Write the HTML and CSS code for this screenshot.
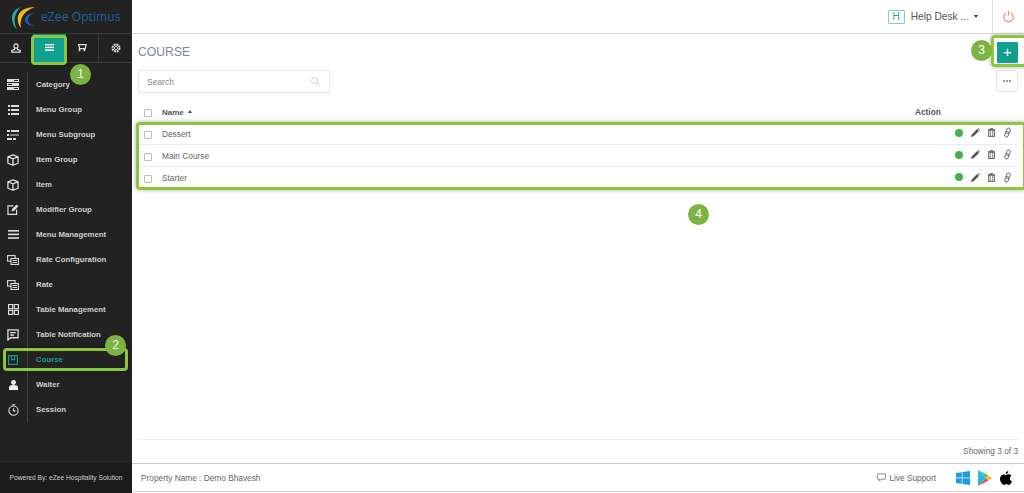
FILE: index.html
```html
<!DOCTYPE html>
<html>
<head>
<meta charset="UTF-8">
<title>Course</title>
<link rel="stylesheet" href="styles.css">
</head>
<body>
<div class="app">
	<aside class="sidebar">
		<div class="logo">
			<svg width="24" height="22" viewBox="0 0 24 22">
				<path d="M9 0C2 2 0 7 0 11c0 5 2 9 5 11-2-4-3-7-2-12C4 6 6 2 9 0z" fill="#2aa7a0"/>
				<path d="M23 0C15 0 8 3 6 9c-1 5 1 10 3 12-1-6 0-11 4-15 3-3 7-5 10-6z" fill="#f2b71c"/>
				<path d="M23 6c-6 0-10 3-10 7 0 3 4 6 10 6-4-1-7-3-7-6s3-6 7-7z" fill="#1c5fa8"/>
			</svg>
			<span class="logo-text">eZee Optimus</span>
		</div>
		<div class="tabs">
			<div class="tab">
				<svg width="10" height="10" viewBox="0 0 12 12" fill="none" stroke="#e4e4e4" stroke-width="1.4"><circle cx="6" cy="3.5" r="2.5"/><path d="M4.500 6v1.500L1 9v2h10V9L7.500 7.500V6"/></svg>
			</div>
			<div class="tab tab-active">
				<svg width="9" height="7" viewBox="0 0 9 7" fill="#fff"><rect width="9" height="1.4"/><rect y="2.7" width="9" height="1.4"/><rect y="5.4" width="9" height="1.4"/></svg>
			</div>
			<div class="tab">
				<svg width="10" height="9" viewBox="0 0 12 11" fill="none" stroke="#e4e4e4" stroke-width="1.5"><path d="M1 2h10l-1 5H3L2 2"/><path d="M3 7v3M9 7v3" stroke-width="2"/></svg>
			</div>
			<div class="tab">
				<svg width="10" height="10" viewBox="0 0 12 12" fill="none" stroke="#e4e4e4"><circle cx="6" cy="6" r="2"/><circle cx="6" cy="6" r="4.2" stroke-width="2.4" stroke-dasharray="2.2 1.1"/></svg>
			</div>
		</div>
		<ul class="menu">
			<li class="menu-item"><span class="menu-icon"><svg width="12" height="11" viewBox="0 0 12 11" fill="#ddd"><path d="M0 0h12v3H0zM0 4h12v3H0zM0 8h12v3H0z"/><path d="M7 1h4v1H7zM1 5h4v1H1zM7 9h4v1H7z" fill="#222"/></svg></span><span class="menu-label">Category</span></li>
			<li class="menu-item"><span class="menu-icon"><svg width="11" height="10" viewBox="0 0 11 10" fill="#ddd"><path d="M0 0h2v2H0zM3 0h8v2H3zM0 4h2v2H0zM3 4h8v2H3zM0 8h2v2H0zM3 8h8v2H3z"/></svg></span><span class="menu-label">Menu Group</span></li>
			<li class="menu-item"><span class="menu-icon"><svg width="12" height="10" viewBox="0 0 12 10" fill="#ddd"><path d="M0 0h3v2H0zM4 0h8v2H4zM0 4h2v2H0zM3 4.500h9v1H3zM0 8h5v2H0zM6 8h3v2H6z"/></svg></span><span class="menu-label">Menu Subgroup</span></li>
			<li class="menu-item"><span class="menu-icon"><svg width="12" height="12" viewBox="0 0 13 13" fill="none" stroke="#ddd" stroke-width="1.4" stroke-linejoin="round"><path d="M6.500 1L12 3v7l-5.500 2.200L1 10V3zM1 3l5.500 2.200L12 3M6.500 5.200v7"/></svg></span><span class="menu-label">Item Group</span></li>
			<li class="menu-item"><span class="menu-icon"><svg width="12" height="12" viewBox="0 0 13 13" fill="none" stroke="#ddd" stroke-width="1.4" stroke-linejoin="round"><path d="M6.500 1L12 3v7l-5.500 2.200L1 10V3zM1 3l5.500 2.200L12 3M6.500 5.200v7"/></svg></span><span class="menu-label">Item</span></li>
			<li class="menu-item"><span class="menu-icon"><svg width="12" height="11" viewBox="0 0 13 12" fill="none" stroke="#ddd" stroke-width="1.3"><path d="M7 2H1v9.400h9.400V6"/><path d="M5 8l.5-2.500L10.500.500l2 2-5 5z" fill="#ddd" stroke="none"/></svg></span><span class="menu-label">Modifier Group</span></li>
			<li class="menu-item"><span class="menu-icon"><svg width="11" height="9" viewBox="0 0 11 9" fill="#ddd"><rect width="11" height="1.6"/><rect y="3.6" width="11" height="1.6"/><rect y="7.2" width="11" height="1.6"/></svg></span><span class="menu-label">Menu Management</span></li>
			<li class="menu-item"><span class="menu-icon"><svg width="12" height="10" viewBox="0 0 12 10" fill="none" stroke="#ddd" stroke-width="1.1"><rect x=".6" y=".6" width="7.500" height="5.500"/><rect x="4" y="3.500" width="7.400" height="6" fill="#222"/><path d="M5.500 5.500h4.500M5.500 7.500h4.500"/></svg></span><span class="menu-label">Rate Configuration</span></li>
			<li class="menu-item"><span class="menu-icon"><svg width="12" height="10" viewBox="0 0 12 10" fill="none" stroke="#ddd" stroke-width="1.1"><rect x=".6" y=".6" width="7.500" height="5.500"/><rect x="4" y="3.500" width="7.400" height="6" fill="#222"/><path d="M5.500 5.500h4.500M5.500 7.500h4.500"/></svg></span><span class="menu-label">Rate</span></li>
			<li class="menu-item"><span class="menu-icon"><svg width="11" height="11" viewBox="0 0 12 12" fill="none" stroke="#ddd" stroke-width="1.300"><rect x=".6" y=".6" width="4.500" height="4.500"/><rect x="6.900" y=".6" width="4.500" height="4.500"/><rect x=".6" y="6.900" width="4.500" height="4.500"/><rect x="6.900" y="6.900" width="4.500" height="4.500"/></svg></span><span class="menu-label">Table Management</span></li>
			<li class="menu-item"><span class="menu-icon"><svg width="12" height="12" viewBox="0 0 13 13" fill="none" stroke="#ddd" stroke-width="1.400"><path d="M1 1h11v8.500H4L1 12z"/><path d="M3.500 4h6M3.500 6.500h4"/></svg></span><span class="menu-label">Table Notification</span></li>
			<li class="menu-item menu-item-active"><span class="menu-icon"><svg width="10" height="10" viewBox="0 0 10 10" fill="none" stroke="#0fa08f" stroke-width="1.100"><rect x=".6" y=".6" width="8.800" height="8.800"/><path d="M3.500 .6v4h3v-4"/></svg></span><span class="menu-label">Course</span></li>
			<li class="menu-item"><span class="menu-icon"><svg width="9" height="10" viewBox="0 0 11 12" fill="#eee"><circle cx="5.500" cy="3" r="3"/><path d="M0 12V9c0-2 2-3 5.500-3S11 7 11 9v3z"/></svg></span><span class="menu-label">Waiter</span></li>
			<li class="menu-item"><span class="menu-icon"><svg width="11" height="12" viewBox="0 0 12 13" fill="none" stroke="#ddd" stroke-width="1.200"><circle cx="6" cy="7.200" r="5"/><path d="M4 .8h4M6 4.500v3h2.200"/></svg></span><span class="menu-label">Session</span></li>
		</ul>
		<div class="powered">Powered By: eZee Hospitality Solution</div>
	</aside>

	<div class="main">
		<header class="topbar">
			<div class="helpdesk">
				<span class="helpdesk-badge">H</span>
				<span>Help Desk ...</span>
				<span class="caret"></span>
			</div>
			<div class="power">
				<svg width="11" height="13" viewBox="0 0 11 13" fill="none" stroke="#f28b82" stroke-width="1.100"><path d="M3 3a4.800 4.800 0 1 0 5 0"/><path d="M5.500 .5v5"/></svg>
			</div>
		</header>

		<section class="content">
			<div class="title-row">
				<h1 class="page-title">COURSE</h1>
				<button class="btn-add">+</button>
			</div>
			<div class="tools-row">
				<div class="search">
					<span>Search</span>
					<svg width="9" height="9" viewBox="0 0 11 11" fill="none" stroke="#ccc" stroke-width="1.200"><circle cx="4.500" cy="4.500" r="3.800"/><path d="M7.300 7.300L10.500 10.500"/></svg>
				</div>
				<button class="btn-more"><span></span><span></span><span></span></button>
			</div>
			<div class="list">
				<div class="list-head">
					<span class="check"></span>
					<span class="col-name">Name <span class="sort"></span></span>
					<span class="col-action">Action</span>
				</div>
				<div class="row">
					<span class="check"></span><span class="col-name">Dessert</span>
					<div class="row-actions">
						<span class="dot"></span>
						<svg width="9" height="9" viewBox="0 0 9 9" fill="#555"><path d="M0 9l.7-2.600L6 1l2 2-5.400 5.300zM6.600.4L7.300 0 9 1.700l-.4.700z"/></svg>
						<svg width="7" height="9" viewBox="0 0 7 9" fill="#777"><path d="M2 0h3v1h2v8H0V1h2zM1.300 3v4.700h1V3zM3 3v4.700h1V3zM4.700 3v4.700h1V3z" fill-rule="evenodd"/></svg>
						<svg width="9" height="11" viewBox="0 0 9 11" fill="none" stroke="#666" stroke-width=".9"><g transform="rotate(20 4.500 5.500)"><rect x="2.700" y=".8" width="3.600" height="5.600" rx="1.800"/><rect x="2.700" y="4.600" width="3.600" height="5.600" rx="1.800"/></g></svg>
					</div>
				</div>
				<div class="row">
					<span class="check"></span><span class="col-name">Main Course</span>
					<div class="row-actions">
						<span class="dot"></span>
						<svg width="9" height="9" viewBox="0 0 9 9" fill="#555"><path d="M0 9l.7-2.600L6 1l2 2-5.400 5.300zM6.600.4L7.300 0 9 1.700l-.4.700z"/></svg>
						<svg width="7" height="9" viewBox="0 0 7 9" fill="#777"><path d="M2 0h3v1h2v8H0V1h2zM1.300 3v4.700h1V3zM3 3v4.700h1V3zM4.700 3v4.700h1V3z" fill-rule="evenodd"/></svg>
						<svg width="9" height="11" viewBox="0 0 9 11" fill="none" stroke="#666" stroke-width=".9"><g transform="rotate(20 4.500 5.500)"><rect x="2.700" y=".8" width="3.600" height="5.600" rx="1.800"/><rect x="2.700" y="4.600" width="3.600" height="5.600" rx="1.800"/></g></svg>
					</div>
				</div>
				<div class="row row-last">
					<span class="check"></span><span class="col-name">Starter</span>
					<div class="row-actions">
						<span class="dot"></span>
						<svg width="9" height="9" viewBox="0 0 9 9" fill="#555"><path d="M0 9l.7-2.600L6 1l2 2-5.400 5.300zM6.600.4L7.300 0 9 1.700l-.4.700z"/></svg>
						<svg width="7" height="9" viewBox="0 0 7 9" fill="#777"><path d="M2 0h3v1h2v8H0V1h2zM1.300 3v4.700h1V3zM3 3v4.700h1V3zM4.700 3v4.700h1V3z" fill-rule="evenodd"/></svg>
						<svg width="9" height="11" viewBox="0 0 9 11" fill="none" stroke="#666" stroke-width=".9"><g transform="rotate(20 4.500 5.500)"><rect x="2.700" y=".8" width="3.600" height="5.600" rx="1.800"/><rect x="2.700" y="4.600" width="3.600" height="5.600" rx="1.800"/></g></svg>
					</div>
				</div>
			</div>
			<div class="showing">Showing 3 of 3</div>
		</section>

		<footer class="footer">
			<span class="property">Property Name : Demo Bhavesh</span>
			<span class="support">
				<svg width="9" height="9" viewBox="0 0 11 10" fill="none" stroke="#777"><path d="M.5.500h10v6.500H5L3 9.500V7H.5z"/></svg>
				Live Support
			</span>
			<span class="stores">
				<svg width="14" height="14" viewBox="0 0 14 14" fill="#1e9be8"><path d="M0 2l5.800-.8v5.400H0zM6.500 1.100L14 0v6.600H6.500zM0 7.300h5.800v5.500L0 12zM6.500 7.300H14V14l-7.500-1.100z"/></svg>
				<svg width="14" height="16" viewBox="0 0 14 16"><path d="M0 0l8 8-8 8z" fill="#29b6e8"/><path d="M0 0l10.500 5.500L8 8z" fill="#3ecf6e"/><path d="M0 16l10.500-5.500L8 8z" fill="#ef4b4b"/><path d="M10.500 5.500L14 8l-3.500 2.500L8 8z" fill="#fbc02d"/></svg>
				<svg width="12" height="14" viewBox="0 0 13 15" fill="#000"><path d="M9 0c.1 1.800-1.300 3.300-2.800 3.200C6 1.600 7.500.1 9 0zM6.400 4.200c.8 0 1.600-.7 3-.7 1.100 0 2.300.6 3 1.600-2.500 1.500-2.100 5 .6 6.100-.7 1.700-2 3.800-3.300 3.800-1 0-1.400-.6-2.600-.6s-1.700.6-2.700.6C2.500 15 0 11.400 0 8.300c0-3 2-4.700 3.800-4.700 1.100 0 2 .6 2.600.6z"/></svg>
			</span>
		</footer>
	</div>

	<!-- tutorial highlights drawn on top of the page -->
	<div class="hl hl-tab"></div>
	<div class="hl hl-course"></div>
	<div class="hl hl-add"></div>
	<div class="hl hl-rows"></div>
	<div class="step step-1">1</div>
	<div class="step step-2">2</div>
	<div class="step step-3">3</div>
	<div class="step step-4">4</div>
</div>
</body>
</html>
```

FILE: styles.css
```css
html, body {
	margin: 0;
	padding: 0;
}
body {
	font-family: "Liberation Sans", Arial, sans-serif;
	font-size: 8px;
	color: #555;
	background: #fff;
}
ul {
	list-style: none;
	margin: 0;
	padding: 0;
}
.app {
	position: relative;
	display: flex;
	width: 1024px;
	height: 493px;
	overflow: hidden;
}

/* sidebar */
.sidebar {
	display: flex;
	flex-direction: column;
	flex: 0 0 132px;
	width: 132px;
	background: #222222;
}
.logo {
	display: flex;
	align-items: center;
	height: 33px;
	padding: 3px 0 0 12px;
	box-sizing: border-box;
}
.logo-text {
	margin: -3px 0 0 5px;
	font-family: "Open Sans", sans-serif;
	font-size: 12px;
	color: #1b62a5;
	letter-spacing: .1px;
}
.tabs {
	display: flex;
	height: 28px;
	border-top: 1px solid #3a3a3a;
	border-bottom: 1px solid #3a3a3a;
}
.tab {
	display: flex;
	flex: 0 0 33px;
	align-items: center;
	justify-content: center;
	box-sizing: border-box;
	padding-bottom: 1px;
	border-right: 1px solid #3a3a3a;
}
.tab:last-child {
	border-right: 0;
}
.tab-active {
	background: #0fa08f;
	border-right: 0;
}
.menu {
	flex: 1;
	padding-top: 9px;
}
.menu-item {
	display: flex;
	align-items: center;
	height: 25px;
}
.menu-icon {
	display: flex;
	flex: 0 0 28px;
	height: 25px;
	box-sizing: border-box;
	align-items: center;
	justify-content: center;
	padding-right: 1px;
	border-right: 1px solid #3f3f3f;
}
.menu-label {
	padding-left: 8px;
	font-size: 7.8px;
	font-weight: bold;
	color: #cfcfcf;
}
.menu-item-active .menu-label {
	color: #0fa08f;
}
.powered {
	height: 30px;
	line-height: 29px;
	text-align: center;
	font-size: 6.65px;
	color: #d0d0d0;
	background: #1b1b1b;
}

/* main column */
.main {
	display: flex;
	flex-direction: column;
	flex: 1;
	min-width: 0;
}
.topbar {
	display: flex;
	justify-content: flex-end;
	height: 34px;
	box-sizing: border-box;
	border-bottom: 1px solid #d9d9d9;
}
.helpdesk {
	display: flex;
	align-items: center;
	gap: 6px;
	padding-right: 14px;
	font-size: 10.2px;
	color: #555;
}
.helpdesk-badge {
	width: 15px;
	height: 12px;
	line-height: 12px;
	text-align: center;
	font-size: 10px;
	color: #2aa79b;
	border: 1px solid #7fd0c8;
	border-radius: 1px;
}
.caret {
	width: 0;
	height: 0;
	margin-left: -1px;
	border-left: 2.5px solid transparent;
	border-right: 2.5px solid transparent;
	border-top: 3px solid #333;
}
.power {
	display: flex;
	flex: 0 0 32px;
	align-items: center;
	justify-content: center;
	box-sizing: border-box;
	border-left: 1px solid #e3e3e3;
}
.content {
	display: flex;
	flex-direction: column;
	flex: 1;
	padding: 0 6px;
}
.title-row {
	display: flex;
	align-items: center;
	justify-content: space-between;
	height: 36px;
}
.page-title {
	margin: 0;
	font-size: 12.2px;
	font-weight: normal;
	color: #7d8899;
}
.btn-add {
	width: 21px;
	height: 21px;
	padding: 0;
	border: 0;
	border-radius: 1px;
	font-family: "Liberation Sans", sans-serif;
	font-size: 15px;
	line-height: 20px;
	color: #fff;
	background: #0fa08f;
}
.tools-row {
	display: flex;
	align-items: flex-start;
	justify-content: space-between;
}
.search {
	display: flex;
	align-items: center;
	justify-content: space-between;
	width: 192px;
	height: 23px;
	box-sizing: border-box;
	padding: 0 9px 0 8px;
	border: 1px solid #e3e6ea;
	border-radius: 2px;
	font-size: 8.5px;
	color: #888;
}
.btn-more {
	display: flex;
	gap: 1px;
	align-items: center;
	justify-content: center;
	width: 22px;
	height: 22px;
	padding: 0;
	background: #fff;
	border: 1px solid #e3e6ea;
	border-radius: 2px;
}
.btn-more span {
	width: 2px;
	height: 2px;
	border-radius: 50%;
	background: #777;
}
.list {
	flex: 1;
	margin-top: 8px;
	border-bottom: 1px solid #eceef1;
}
.list-head, .row {
	display: flex;
	align-items: center;
	box-sizing: border-box;
	padding-left: 6px;
}
.list-head {
	height: 22px;
	font-weight: bold;
	font-size: 8px;
	color: #555;
}
.row {
	height: 22px;
	font-size: 8.3px;
	color: #666;
	border-bottom: 1px solid #e8ebf0;
}
.row-last {
	border-bottom: 0;
}
.check {
	width: 6px;
	height: 6px;
	margin: 2px 10px 0 0;
	background: #fff;
	border: 1px solid #bbb;
	border-radius: 1px;
}
.col-name {
	flex: 1;
}
.sort {
	display: inline-block;
	width: 0;
	height: 0;
	margin-left: 2px;
	vertical-align: 2px;
	border-left: 2.5px solid transparent;
	border-right: 2.5px solid transparent;
	border-bottom: 3px solid #444;
}
.col-action {
	width: 103px;
	font-size: 8.3px;
}
.row-actions {
	display: flex;
	align-items: center;
	gap: 8px;
	padding: 0 6px 2px 0;
}
.dot {
	width: 8px;
	height: 8px;
	border-radius: 50%;
	background: #43b14b;
}
.showing {
	height: 23px;
	line-height: 22px;
	text-align: right;
	font-size: 8.3px;
	color: #666;
}
.footer {
	display: flex;
	align-items: center;
	height: 29px;
	box-sizing: border-box;
	margin-bottom: 1px;
	padding: 0 12px 0 9px;
	border-top: 1px solid #c8c8c8;
	border-bottom: 1px solid #d9d9d9;
	font-size: 8.3px;
	color: #666;
}
.property {
	flex: 1;
}
.support {
	display: flex;
	align-items: center;
	gap: 3px;
	margin-right: 20px;
}
.stores {
	display: flex;
	align-items: center;
	gap: 8px;
}

/* tutorial overlay */
.hl {
	position: absolute;
	box-sizing: border-box;
	border: 3px solid #8cc63f;
	border-radius: 4px;
	box-shadow: 0 0 4px rgba(0, 0, 0, .35);
}
.hl-tab {
	left: 31px;
	top: 35px;
	width: 36px;
	height: 30px;
}
.hl-course {
	left: 3px;
	top: 348px;
	width: 125px;
	height: 23px;
}
.hl-add {
	left: 991px;
	top: 35px;
	width: 36px;
	height: 32px;
}
.hl-rows {
	left: 136px;
	top: 122px;
	width: 890px;
	height: 68px;
}
.step {
	position: absolute;
	width: 21px;
	height: 21px;
	line-height: 21px;
	text-align: center;
	font-size: 12px;
	color: #fff;
	border-radius: 50%;
	background: #7cb342;
}
.step-1 {
	left: 70px;
	top: 64px;
}
.step-2 {
	left: 105px;
	top: 335px;
}
.step-3 {
	left: 971px;
	top: 40px;
}
.step-4 {
	left: 688px;
	top: 204px;
}
```
